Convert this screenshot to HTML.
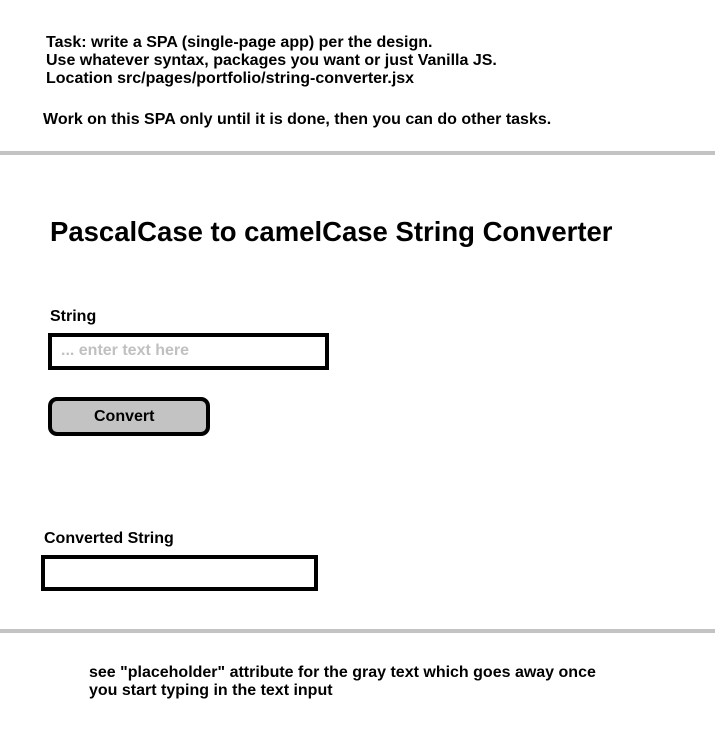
<!DOCTYPE html>
<html><head><style>
body{margin:0;width:715px;height:739px;background:#fff;position:relative;font-family:"Liberation Sans",Arial,sans-serif;font-weight:bold;color:#000;overflow:hidden}
.a{position:absolute;white-space:nowrap}
.t{font-size:16px;line-height:18px}
.hr{position:absolute;left:0;width:715px;height:4px;background:#c3c3c3}
</style></head><body>
<div class="a t" style="left:46px;top:34px">Task: write a SPA (single-page app) per the design.<br>Use whatever syntax, packages you want or just Vanilla JS.<br>Location src/pages/portfolio/string-converter.jsx</div>
<div class="a t" style="left:43px;top:111px">Work on this SPA only until it is done, then you can do other tasks.</div>
<div class="hr" style="top:151px"></div>
<div class="a" style="left:50px;top:216px;font-size:27.5px">PascalCase to camelCase String Converter</div>
<div class="a t" style="left:50px;top:308px">String</div>
<div class="a" style="left:48px;top:333px;width:273px;height:29px;border:4px solid #000;"></div>
<div class="a t" style="left:61px;top:342px;color:#c0c0c0">... enter text here</div>
<div class="a" style="left:48px;top:397px;width:154px;height:31px;border:4px solid #000;border-radius:9px;background:#c3c3c3"></div>
<div class="a t" style="left:94px;top:408px;font-size:16px">Convert</div>
<div class="a t" style="left:44px;top:530px">Converted String</div>
<div class="a" style="left:41px;top:555px;width:269px;height:28px;border:4px solid #000"></div>
<div class="hr" style="top:629px"></div>
<div class="a t" style="left:89px;top:664px">see "placeholder" attribute for the gray text which goes away once<br>you start typing in the text input</div>
</body></html>
